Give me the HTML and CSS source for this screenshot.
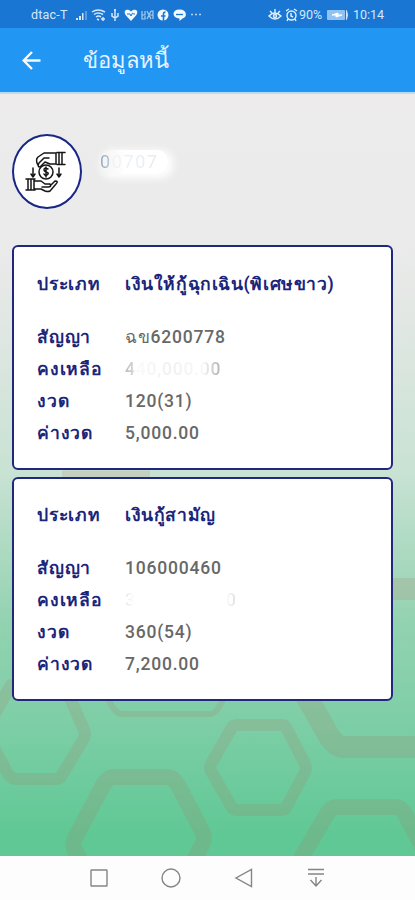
FILE: index.html
```html
<!doctype html>
<html lang="th">
    <head>
        <meta charset="UTF-8" />
        <meta name="viewport" content="width=device-width, initial-scale=1.0" />
        <title>ข้อมูลหนี้</title>
        <link rel="stylesheet" href="styles.css">
    </head>
    <body>
        <div class="status">
            <span class="carrier">dtac-T</span>
            <svg class="status-left" width="130" height="16" viewBox="0 0 130 16">
                <path d="M1 13v-2h2v2zM4 13V9h2v4zM7 13V6h1.500v7z" fill="#d5e8fa" />
                <path d="M10 13V4h2v9z" fill="#5b9bdc" />
                <g fill="none" stroke="#d5e8fa" stroke-width="1.500">
                    <path d="M17 5q6-4 13 0M19 7.500q4-3 9 0M21 10q2.500-2 5 0M22 12l2 1M26 12h4M28 10v4" />
                    <path d="M40 2v12M37 6v3l3 2 3-2V6M39 3h2" />
                    <path d="M67 4v8h3V9M70 4v4h-3M72 4l4 8M76 4l-4 8M78 12V4h-2M78 8h-3" stroke-width="1.200" stroke="#a8cdf1" />
                </g>
                <path d="M56 14l-5-5.500C47 3 53 1 56 4.500 59 1 65 3 61 8.500z" fill="#f1f8ff" />
                <path d="M52 7h3l1 2 1.500-3 1 1H60" fill="none" stroke="#1976d2" />
                <circle cx="88" cy="8" r="5.500" fill="#f1f8ff" />
                <path d="M88.500 14V7q0-2 2-2M86 9h4.500" fill="none" stroke="#1976d2" stroke-width="1.600" />
                <path d="M104.500 2.500c8 0 8 8 3 9l-3 2.500v-2.500c-8-.5-8-9 0-9z" fill="#f1f8ff" />
                <path d="M101 7.500h7" stroke="#1976d2" stroke-width="1.300" />
                <path d="M116 7.500h2M120 7.500h2M124 7.500h2" stroke="#b4d3f2" stroke-width="1.500" />
            </svg>
            <svg class="status-right" width="30" height="16" viewBox="0 0 30 16">
                <g fill="none" stroke="#e3f1fd" stroke-width="1.400">
                    <path d="M1 9q5.500-6 12 0-6 6-12 0zM2 4l2 2M7 2v4M12 4l-2 2" />
                    <circle cx="7" cy="9" r="1.500" />
                    <circle cx="23.500" cy="8.500" r="4.500" />
                    <path d="M18 4l3-2M26 2l3 2M23 6v3l2 1M20 12l-1 2M27 12l1 2" />
                </g>
            </svg>
            <span class="percent">90%</span>
            <svg class="battery" width="24" height="12" viewBox="0 0 24 12">
                <rect x="1" y="1" width="18" height="10" rx="1" fill="#90c3f3" />
                <path d="M6 6l6-2v2h4l-6 2V6z" fill="#fff" stroke="#fff" />
                <path d="M20.500 1.500v9q2-4.500 0-9z" fill="none" stroke="#d5e8fa" />
            </svg>
            <span class="time">10:14</span>
        </div>

        <header class="appbar">
            <svg class="back" width="20" height="20" viewBox="0 0 20 20">
                <path d="M18.500 10.500H2M10 2L1.700 10.500l8.300 8.500" />
            </svg>
            <h1>ข้อมูลหนี้</h1>
        </header>

        <main class="content">
            <svg class="hexagons" width="415" height="762" viewBox="0 94 415 762">
                <g fill="none" stroke="#b06f5c" stroke-opacity=".17" stroke-linejoin="round">
                    <path stroke-width="12" d="M-8 719L11 685h49q4 0 6 4l18 41q2 5-1 10l-21 35q-2 4-7 4H17q-6 0-9-5L-8 744" />
                    <path stroke-width="6" d="M98 680l14 26q4 7 9 8h89q5 0 9-7l15-27" />
                    <path stroke-width="12" d="M237 725h45q3 0 5 4l18 35q2 4 0 8l-18 34q-2 4-6 4h-44q-4 0-6-4l-20-35q-2-3 0-7l20-35q2-4 6-4z" />
                    <path stroke-width="16" d="M81 862l-6-12q-3-6 0-12l25-47q6-14 14-14h52q8 0 13 10l23 44q4 7 0 14l-9 17" />
                    <path stroke-width="22" d="M296 678l29 51q9 18 19 18h80" />
                    <path stroke-width="16" d="M300 860l27-46q4-7 10-7h58q6 0 10 7l26 50" />
                    <path stroke-width="22" d="M390 589h40" />
                    <path stroke-width="7" d="M62 474h88" />
                </g>
            </svg>

            <section class="member">
                <div class="avatar">
                    <svg width="46" height="44" viewBox="0 0 46 44">
                        <g fill="none" stroke="#161616" stroke-width="1.500" stroke-linejoin="round" stroke-linecap="round">
                            <circle cx="22" cy="22" r="7" />
                            <path d="M14 15q-3-5 0-8l6-4h12v11h-6l-5-2-5 5q-3 0-1-4l5-5h5M35 3v11M38 3v11M33 2.500h8M33 14.500h8" />
                            <path d="M2 29h9M2 40h9M4 29v11M7 29v11M10 29v11M11 31h6l4 3h5q2 3-2 3h-6M27 35l4-4q4 0 1 3l-6 7q-2 1-5 0l-4-2h-6" />
                            <path d="M9 18v8M7 24l2 3 2-3M35 18v8M33 24l2 3 2-3" />
                            <path d="M24 19q-4-2-4 1 0 1 2 2 4 1 1 3-2 1-3-1M22 17v10" />
                        </g>
                    </svg>
                </div>
                <div class="member-id"><span>00707</span></div>
            </section>

            <section class="card">
                <dl>
                    <dt>ประเภท</dt><dd class="kind">เงินให้กู้ฉุกเฉิน(พิเศษขาว)</dd>
                    <dt>สัญญา</dt><dd>ฉข6200778</dd>
                    <dt>คงเหลือ</dt><dd><span class="hidden-sum">440,000.00</span></dd>
                    <dt>งวด</dt><dd>120(31)</dd>
                    <dt>ค่างวด</dt><dd>5,000.00</dd>
                </dl>
            </section>

            <section class="card second">
                <dl>
                    <dt>ประเภท</dt><dd class="kind">เงินกู้สามัญ</dd>
                    <dt>สัญญา</dt><dd>106000460</dd>
                    <dt>คงเหลือ</dt><dd><span class="hidden-sum faint">3,000,000.00</span></dd>
                    <dt>งวด</dt><dd>360(54)</dd>
                    <dt>ค่างวด</dt><dd>7,200.00</dd>
                </dl>
            </section>
        </main>

        <nav class="navbar">
            <svg width="20" height="20" viewBox="0 0 20 20"><rect x="2" y="2" width="16" height="16" rx=".5" /></svg>
            <svg width="20" height="20" viewBox="0 0 20 20"><circle cx="10" cy="10" r="9" /></svg>
            <svg width="20" height="20" viewBox="0 0 20 20"><path d="M17.500 1.500v17L2 10z" /></svg>
            <svg width="20" height="20" viewBox="0 0 20 20"><path d="M2 1.500h16M2 6h16M10 9v9M4.500 12l5.500 6 5.500-6" /></svg>
        </nav>
    </body>
</html>
```

FILE: styles.css
```css
* {
    box-sizing: border-box;
}
body {
    margin: 0;
    width: 415px;
    height: 900px;
    overflow: hidden;
    display: flex;
    flex-direction: column;
    font-family: Roboto, "Noto Sans", sans-serif;
}
.status {
    height: 28px;
    padding: 2px 0 0 31px;
    display: flex;
    align-items: center;
    background: #1976d2;
    color: #d5e8fa;
    font-size: 12.5px;
    line-height: 16px;
    white-space: nowrap;
}
.carrier {
    width: 44px;
    letter-spacing: 0.2px;
}
.status-right {
    margin-left: 63px;
}
.percent {
    width: 27px;
    margin-left: 1px;
}
.battery {
    margin-right: 3px;
}
.appbar {
    height: 66px;
    padding: 0 0 0 22px;
    display: flex;
    align-items: center;
    background: #2196f3;
    border-bottom: 2px solid #b8dcf8;
}
.back {
    fill: none;
    stroke: #f3faff;
    stroke-width: 2.4;
}
h1 {
    margin: 0 0 0 41px;
    padding-top: 2px;
    color: #e8f5ff;
    font-size: 22px;
    font-weight: 500;
    line-height: 32px;
    white-space: nowrap;
}
.content {
    position: relative;
    height: 762px;
    padding: 40px 22px 0 12px;
    background: linear-gradient(#edebec 0, #ebebeb 150px, #e4e8e5 210px, #c8e2d3 380px, #92d2b0 530px, #7dcea6 630px, #60c895 740px, #60c895 100%);
}
.hexagons {
    position: absolute;
    top: 0;
    left: 0;
}
.member {
    position: relative;
    height: 111px;
    display: flex;
    align-items: flex-start;
}
.avatar {
    width: 70px;
    height: 75px;
    display: flex;
    align-items: center;
    justify-content: center;
    background: #fff;
    border: 2px solid #182686;
    border-radius: 50%;
}
.member-id {
    margin: 16px 0 0 18px;
    width: 68px;
    height: 24px;
    background: linear-gradient(90deg, #f3f3f4, #fff 25px);
    box-shadow: 3px 2px 9px 2px #fff;
    border-radius: 10px;
    line-height: 23px;
    font-size: 18px;
    letter-spacing: 1.6px;
}
.member-id span {
    color: transparent;
    background: linear-gradient(90deg, #91a6bf 0, #b1bfd0 8px, #f0f3f6 13px, #e5ecf2 55px);
    background-clip: text;
}
.card {
    position: relative;
    height: 225px;
    padding: 21px 0 0 23px;
    background: #fff;
    border: 2px solid #20277d;
    border-radius: 6px;
}
.second {
    height: 224px;
    margin-top: 7px;
    padding-top: 20px;
}
dl {
    margin: 0;
    display: grid;
    grid-template-columns: 88px 1fr;
    grid-template-rows: 53px repeat(4, 32px);
    line-height: 32px;
    font-size: 17.5px;
    font-weight: 500;
    white-space: nowrap;
}
dt,
.kind {
    color: #1b2579;
    font-weight: 700;
    letter-spacing: 0.75px;
}
dd {
    margin: 0;
    color: #686868;
    letter-spacing: 0.8px;
}
dd.kind {
    color: #1b2579;
    letter-spacing: 0.6px;
}
.hidden-sum {
    color: transparent;
    background: linear-gradient(90deg, #bbb 0, #ccc 6px, #fafafa 12px, #f0f0f0 45px, #f8f8f8 78px, #bbb 92px);
    background-clip: text;
}
.faint {
    background: linear-gradient(90deg, #e5e5e5 0, #fff 9px, #fff 100px, #ddd 112px);
    background-clip: text;
}
.navbar {
    height: 44px;
    padding: 0 89px;
    display: flex;
    align-items: center;
    justify-content: space-between;
    background: #fdfdfd;
}
.navbar svg {
    fill: none;
    stroke: #858585;
    stroke-width: 1.4;
}
```
